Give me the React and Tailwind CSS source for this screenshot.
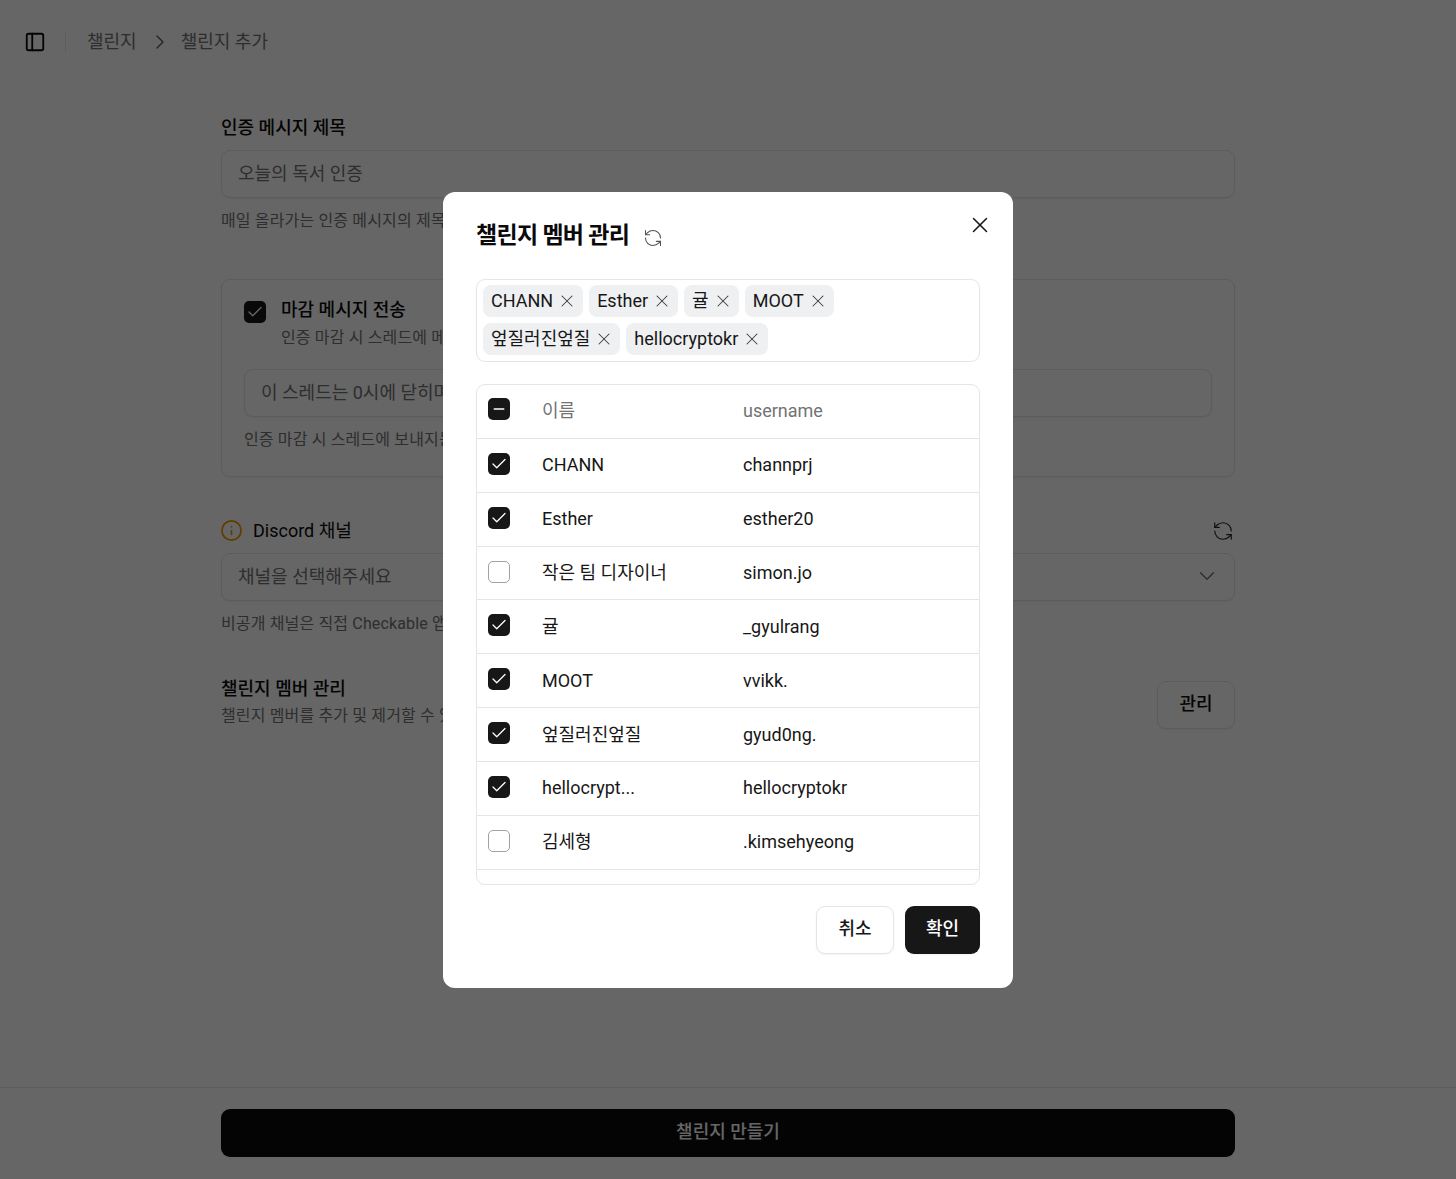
import React from "react";
import { Check, ChevronDown, ChevronRight, Info, Minus, PanelLeft, RefreshCcw, X } from "lucide-react";

const font = "font-['Roboto','Noto_Sans_CJK_KR',sans-serif]";

const row1 = ["CHANN", "Esther", "귤", "MOOT"];
const row2 = ["엎질러진엎질", "hellocryptokr"];

const members = [
  { name: "CHANN", username: "channprj", checked: true },
  { name: "Esther", username: "esther20", checked: true },
  { name: "작은 팀 디자이너", username: "simon.jo", checked: false },
  { name: "귤", username: "_gyulrang", checked: true },
  { name: "MOOT", username: "vvikk.", checked: true },
  { name: "엎질러진엎질", username: "gyud0ng.", checked: true },
  { name: "hellocrypt...", username: "hellocryptokr", checked: true },
  { name: "김세형", username: ".kimsehyeong", checked: false },
];

const CheckBox = ({ state }) => {
  if (state === "none") {
    return <span className="block w-[22px] h-[22px] rounded-[5px] border border-neutral-400 bg-white" />;
  }
  return (
    <span className="flex items-center justify-center w-[22px] h-[22px] rounded-[5px] bg-[#171717] text-white">
      {state === "some" ? <Minus size={16} strokeWidth={2.5} /> : <Check size={18} strokeWidth={1.75} />}
    </span>
  );
};

const Tag = ({ label }) => (
  <span className="flex items-center gap-[4px] h-8 pl-2 pr-[6px] rounded-lg bg-[#eff0f2] text-[18px] text-[#171717] leading-none">
    {label}
    <X size={20} strokeWidth={1.25} className="text-neutral-700" />
  </span>
);

const Field = ({ placeholder, right }) => (
  <div className="flex items-center justify-between h-12 pl-4 pr-[17px] pb-[2px] rounded-[9px] border border-neutral-200 bg-white shadow-xs text-[18px] text-neutral-500">
    <span>{placeholder}</span>
    {right}
  </div>
);

const App = () => {
  return (
    <div className={`${font} relative flex flex-col h-screen bg-white text-[#0a0a0a]`}>
      {/* Header */}
      <header className="flex items-center h-[83px] pl-[24px]">
        <PanelLeft size={22} strokeWidth={2} className="text-[#0a0a0a]" />
        <div className="w-px h-5 bg-neutral-200 ml-[19px] mr-[21px]" />
        <span className="text-[18px] text-neutral-500">챌린지</span>
        <ChevronRight size={24} strokeWidth={1.25} className="ml-[11px] mr-[9px] text-neutral-600" />
        <span className="text-[18px] text-neutral-500">챌린지 추가</span>
      </header>

      {/* Form */}
      <main className="flex-1 w-[1014px] mx-auto pt-[31px]">
        <label className="block text-[18px] font-medium leading-[28px] mb-[8px]">인증 메시지 제목</label>
        <Field placeholder="오늘의 독서 인증" />
        <p className="mt-[11px] text-[16px] tracking-[0.15px] leading-[24px] text-neutral-500">매일 올라가는 인증 메시지의 제목이에요.</p>

        <section className="mt-[46px] h-[198px] rounded-[9px] border border-neutral-200 shadow-xs px-[22px] pt-[21px]">
          <div className="flex gap-[15px]">
            <CheckBox state="all" />
            <div>
              <p className="text-[18px] font-medium leading-[18px]">마감 메시지 전송</p>
              <p className="mt-[7px] text-[16px] tracking-[0.15px] leading-[24px] text-neutral-500">인증 마감 시 스레드에 메시지를 보낼지 선택해요.</p>
            </div>
          </div>
          <div className="mt-[19px]">
            <Field placeholder="이 스레드는 0시에 닫히며 더 이상 인증할 수 없어요." />
          </div>
          <p className="mt-[11px] text-[16px] tracking-[0.15px] leading-[24px] text-neutral-500">인증 마감 시 스레드에 보내지는 메시지예요.</p>
        </section>

        <div className="mt-[41px] flex items-center justify-between h-6 mb-[11px]">
          <div className="flex items-center gap-[10px]">
            <Info size={23} strokeWidth={1.8} className="-ml-[1px] text-[#f59300]" />
            <span className="text-[18px]">Discord 채널</span>
          </div>
          <RefreshCcw size={22} strokeWidth={1.25} className="mt-[1px] mr-[1px] text-neutral-800" />
        </div>
        <Field placeholder="채널을 선택해주세요" right={<ChevronDown size={26} strokeWidth={1.25} className="-mr-[3px] text-neutral-500" />} />
        <p className="mt-[11px] text-[16px] tracking-[0.15px] leading-[24px] text-neutral-500">비공개 채널은 직접 Checkable 앱을 추가해야 해요.</p>

        <div className="mt-[45px] flex items-start justify-between">
          <div className="-mt-[6px]">
            <p className="text-[18px] font-medium leading-[28px]">챌린지 멤버 관리</p>
            <p className="mt-[1px] text-[16px] tracking-[0.15px] leading-[24px] text-neutral-500">챌린지 멤버를 추가 및 제거할 수 있어요.</p>
          </div>
          <button className="w-[78px] h-12 pb-[4px] rounded-[9px] border border-neutral-200 bg-white shadow-xs text-[18px] font-medium">관리</button>
        </div>
      </main>

      {/* Footer */}
      <footer className="h-[92px] border-t border-neutral-200 pt-[21px]">
        <button className="block w-[1014px] h-12 pb-[4px] mx-auto rounded-[9px] bg-[#0a0a0a] text-white text-[18px] font-medium">챌린지 만들기</button>
      </footer>

      {/* Dialog */}
      <div className="fixed inset-0 flex items-center justify-center bg-black/60">
        <div className="relative flex flex-col w-[570px] h-[796px] rounded-xl bg-white px-[33px] pt-[26px]">
          <div className="flex items-center gap-[14px] h-[34px]">
            <h2 className="pt-[2px] text-[23px] font-semibold tracking-[-0.7px] leading-[34px]">챌린지 멤버 관리</h2>
            <RefreshCcw size={20} strokeWidth={1.3} className="mt-[6px] text-neutral-600" />
          </div>
          <button className="absolute top-[20px] right-[20px] text-[#171717]">
            <X size={26} strokeWidth={1.4} />
          </button>

          <div className="mt-[27px] h-[83px] rounded-[9px] border border-neutral-200 px-[6px] pt-[5px] flex flex-col gap-[6px]">
            <div className="flex gap-[6px]">
              {row1.map((t) => <Tag key={t} label={t} />)}
            </div>
            <div className="flex gap-[6px]">
              {row2.map((t) => <Tag key={t} label={t} />)}
            </div>
          </div>

          <div className="mt-[22px] h-[501px] rounded-[9px] border border-neutral-200 overflow-hidden text-[18px]">
            <div className="flex items-center h-[54.4px] pb-[3.5px] border-b border-neutral-200 text-neutral-500">
              <div className="w-[65px] pl-[11px]"><CheckBox state="some" /></div>
              <div className="w-[201px] pt-[2px]">이름</div>
              <div className="pt-[2px]">username</div>
            </div>
            {members.map((m) => (
              <div key={m.username} className="flex items-center h-[53.87px] pb-[3px] border-b border-neutral-200 text-[#171717]">
                <div className="w-[65px] pl-[11px]"><CheckBox state={m.checked ? "all" : "none"} /></div>
                <div className="w-[201px] pt-[2px]">{m.name}</div>
                <div className="pt-[2px]">{m.username}</div>
              </div>
            ))}
          </div>

          <div className="mt-[21px] flex justify-end gap-[11px]">
            <button className="w-[78px] h-12 pb-[2px] rounded-[9px] border border-neutral-200 bg-white shadow-xs text-[18px] font-medium text-[#171717]">취소</button>
            <button className="w-[75px] h-12 pb-[2px] rounded-[9px] bg-[#171717] shadow-xs text-[18px] font-medium text-white">확인</button>
          </div>
        </div>
      </div>
    </div>
  );
};

export default App;
